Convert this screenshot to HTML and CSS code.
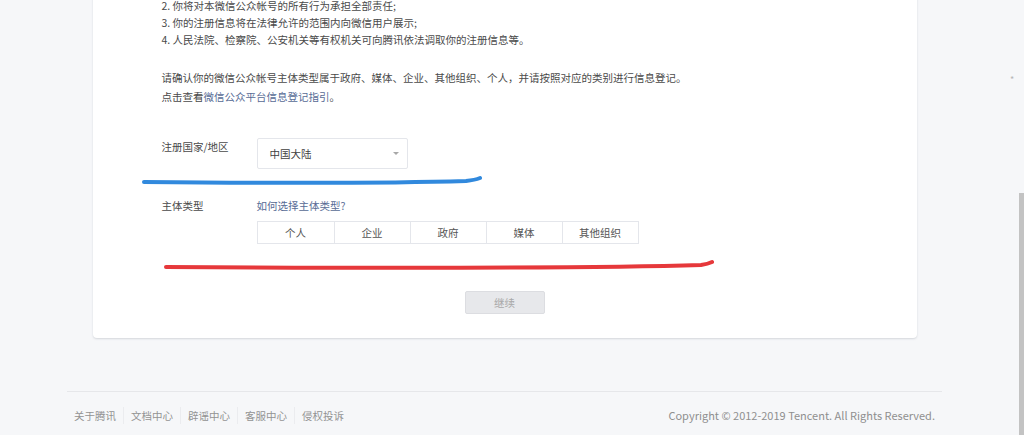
FILE: index.html
```html
<!DOCTYPE html>
<html lang="zh-CN">
<head>
<meta charset="utf-8">
<title>注册信息登记</title>
<link rel="stylesheet" href="styles.css">
</head>
<body>
<div class="viewport">
  <div class="main">
    <div class="card">
      <ol class="terms">
        <li>2. 你将对本微信公众帐号的所有行为承担全部责任;</li>
        <li>3. 你的注册信息将在法律允许的范围内向微信用户展示;</li>
        <li>4. 人民法院、检察院、公安机关等有权机关可向腾讯依法调取你的注册信息等。</li>
      </ol>
      <p class="notice">请确认你的微信公众帐号主体类型属于政府、媒体、企业、其他组织、个人，并请按照对应的类别进行信息登记。<br>点击查看<a class="link" href="#">微信公众平台信息登记指引</a>。</p>
      <div class="form">
        <div class="row row-region">
          <span class="label">注册国家/地区</span>
          <div class="select"><span>中国大陆</span><i class="caret"></i></div>
        </div>
        <div class="row row-type">
          <span class="label">主体类型</span>
          <div class="field">
            <a class="link" href="#">如何选择主体类型?</a>
            <div class="seg">
              <span class="seg-item">个人</span>
              <span class="seg-item">企业</span>
              <span class="seg-item">政府</span>
              <span class="seg-item">媒体</span>
              <span class="seg-item">其他组织</span>
            </div>
          </div>
        </div>
      </div>
      <div class="actions"><button class="btn" disabled>继续</button></div>
      <svg class="mark mark-blue" width="345" height="16" viewBox="0 0 345 16"><path d="M3,10 C110,11 260,11 325,9 Q334,8 339,6" /></svg>
      <svg class="mark mark-red" width="556" height="16" viewBox="0 0 556 16"><path d="M5,9 C190,10 440,10 540,7 Q547,6 551,4" /></svg>
    </div>
    <footer class="footer">
      <nav class="links">
        <a href="#">关于腾讯</a><a href="#">文档中心</a><a href="#">辟谣中心</a><a href="#">客服中心</a><a href="#">侵权投诉</a>
      </nav>
      <span class="copy">Copyright © 2012-2019 Tencent. All Rights Reserved.</span>
    </footer>
  </div>
  <div class="scrollbar"><div class="thumb"></div></div>
  <span class="speck">*</span>
</div>
</body>
</html>
```
FILE: styles.css
```css
* { box-sizing: border-box; }
html, body { margin: 0; padding: 0; }
body {
  background: #f6f7f9;
  font-family: "Noto Sans CJK SC", "Noto Sans", sans-serif;
  font-size: 10.5px;
  color: #4a4a4a;
  overflow: hidden;
  height: 435px;
}
.viewport {
  position: relative;
  display: flex;
  height: 435px;
}
.main { flex: 1; min-width: 0; }
.card {
  position: relative;
  width: 824px;
  margin: -20px auto 0;
  padding: 20px 69px 24px;
  background: #fff;
  border-radius: 4px;
  box-shadow: 0 1px 2px rgba(150, 155, 165, 0.35);
}
.terms {
  list-style: none;
  margin: 0;
  padding: 0;
  line-height: 17px;
}
.terms li:first-child {
  line-height: 11px;
  margin-bottom: 2.5px;
}
.notice {
  margin: 20px 0 0;
  line-height: 19px;
}
.link { color: #576b95; text-decoration: none; }
.form { margin-top: 32.5px; }
.row { display: flex; align-items: flex-start; }
.label { width: 95px; flex: none; line-height: 17px; }
.row-type { margin-top: 27.5px; }
.select {
  width: 151px;
  height: 31px;
  border: 1px solid #e4e6eb;
  border-radius: 2px;
  padding: 0 8px 0 12px;
  display: flex;
  align-items: center;
  justify-content: space-between;
  color: #3f3f3f;
}
.caret {
  width: 0; height: 0;
  border-left: 3px solid transparent;
  border-right: 3px solid transparent;
  border-top: 3.5px solid #a8a8a8;
}
.field { display: flex; flex-direction: column; align-items: flex-start; }
.field .link { line-height: 17px; }
.seg {
  margin-top: 7.5px;
  width: 382px;
  height: 23px;
  display: grid;
  grid-template-columns: repeat(5, 1fr);
  border: 1px solid #e4e6eb;
}
.seg-item {
  display: flex;
  align-items: center;
  justify-content: center;
  color: #555;
  border-left: 1px solid #e4e6eb;
}
.seg-item:first-child { border-left: 0; }
.actions { margin-top: 47px; display: flex; justify-content: center; }
.btn {
  width: 80px;
  height: 23px;
  border: 1px solid #dcdde1;
  border-radius: 2px;
  background: #e7e8eb;
  color: #a9a9a9;
  font: inherit;
  padding: 0;
}
.mark { position: absolute; fill: none; stroke-linecap: round; stroke-width: 4; }
.mark-blue { left: 48px; top: 192px; stroke: #3189dd; }
.mark-red { left: 68px; top: 278px; stroke: #e6383b; }
.footer {
  width: 875px;
  margin: 53px auto 0;
  border-top: 1px solid #e6e7ea;
  padding: 15px 7px 0;
  display: flex;
  justify-content: space-between;
  line-height: 17px;
  color: #8f8f8f;
}
.links { display: flex; }
.links a {
  color: #939393;
  text-decoration: none;
  padding: 0 7px;
  border-left: 1px solid #ebecef;
}
.links a:first-child { padding-left: 0; border-left: 0; }
.copy { font-size: 11px; }
.scrollbar {
  width: 15px;
  flex: none;
  display: flex;
  flex-direction: column;
  align-items: flex-end;
}
.thumb {
  margin-top: 193px;
  width: 5px;
  flex: 1;
  background: #c3c3c3;
}
.speck {
  position: absolute;
  left: 1010px;
  top: 73px;
  font-size: 9px;
  color: #b5b5b5;
}
```
